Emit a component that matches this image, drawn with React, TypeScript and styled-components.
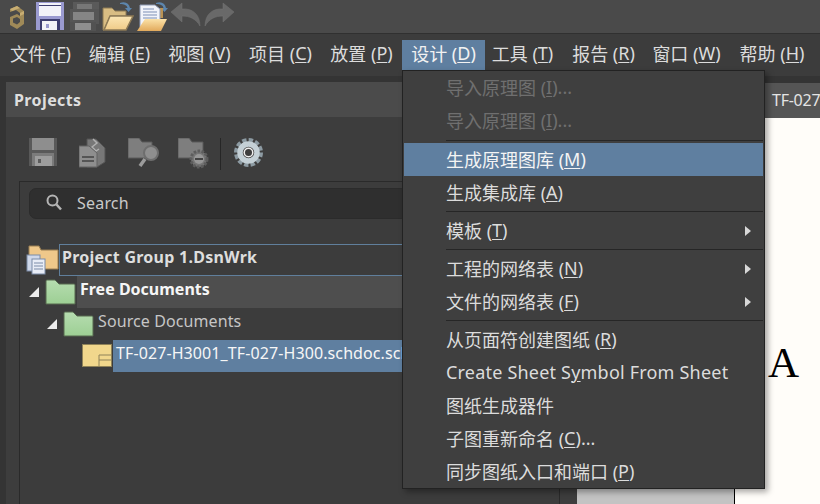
import React from "react";
import styled, { createGlobalStyle } from "styled-components";

const Global = createGlobalStyle`
  html, body { margin: 0; padding: 0; width: 820px; height: 504px; overflow: hidden; background: #333; }
  #root { width: 820px; height: 504px; }
  * { box-sizing: border-box; }
`;

const FONT = `"Noto Sans", "Noto Sans CJK SC", sans-serif`;

const Page = styled.div`
  position: relative;
  width: 820px;
  height: 504px;
  display: flex;
  flex-direction: column;
  overflow: hidden;
  font-family: ${FONT};
  font-size: 18px;
  color: #dcdcdc;
`;

const Toolbar = styled.div`
  height: 34px;
  flex: none;
  display: flex;
  align-items: flex-start;
  background: #4a4a4a;
  border-bottom: 1px solid #303030;
`;

const ToolIcon = styled.svg<{ $ml: number }>`
  display: block;
  flex: none;
  margin-left: ${(p) => p.$ml}px;
`;

const MenuBar = styled.div`
  height: 42px;
  flex: none;
  display: flex;
  align-items: flex-start;
  padding: 6px 0 0 1px;
  background: #3c3c3c;
`;

const MenuTitle = styled.div<{ $active?: boolean; $w: number }>`
  height: 30px;
  width: ${(p) => p.$w}px;
  flex: none;
  display: flex;
  align-items: center;
  justify-content: center;
  padding-bottom: 4px;
  white-space: nowrap;
  background: ${(p) => (p.$active ? "#5f7fa0" : "transparent")};
  color: ${(p) => (p.$active ? "#f2f2f2" : "#dcdcdc")};
`;

const Key = styled.span`
  text-decoration: underline;
  text-underline-offset: 2px;
  text-decoration-thickness: 1px;
`;

const Workspace = styled.div`
  flex: 1;
  min-height: 0;
  display: flex;
  background: #343434;
  padding: 6px 0 0 6px;
`;

const Panel = styled.div`
  width: 571px;
  flex: none;
  display: flex;
  flex-direction: column;
  background: #3d3d3d;
`;

const PanelHeader = styled.div`
  height: 35px;
  flex: none;
  display: flex;
  align-items: center;
  padding-left: 8px;
  background: #4b4b4b;
  font-size: 16px;
  font-weight: 700;
  letter-spacing: 0.4px;
  color: #dedede;
`;

const IconBar = styled.div`
  height: 64px;
  flex: none;
  display: flex;
  align-items: flex-start;
  padding: 21px 0 0 0;
`;

const BarDivider = styled.div`
  width: 1px;
  height: 32px;
  flex: none;
  margin: 0 0 0 10px;
  background: #262626;
`;

const TreeFrame = styled.div`
  flex: 1;
  min-height: 0;
  margin: 0 17px 0 13px;
  border: 1px solid #2a2a2a;
  border-bottom: none;
  background: #3c3c3c;
  padding: 6px 0 0 9px;
  overflow: hidden;
`;

const SearchBox = styled.div`
  height: 31px;
  display: flex;
  align-items: center;
  gap: 15px;
  padding: 0 0 2px 16px;
  border: 1px solid #2b2b2b;
  border-radius: 7px;
  background: #2f2f2f;
  font-size: 16px;
  letter-spacing: 0.2px;
  color: #c9c9c9;
`;

const Tree = styled.div`
  margin: 25px 0 0 -10px;
  display: flex;
  flex-direction: column;
  font-size: 16px;
`;

const TreeRow = styled.div<{ $indent: number }>`
  height: 32px;
  display: flex;
  align-items: center;
  padding-left: ${(p) => p.$indent}px;
  white-space: nowrap;
`;

const Twist = styled.span`
  width: 0;
  height: 0;
  flex: none;
  margin-right: 6px;
  border-style: solid;
  border-width: 0 0 10px 10px;
  border-color: transparent transparent #ececec transparent;
`;

const TreeLabel = styled.div<{ $kind: "root" | "bold" | "plain" | "selected" }>`
  flex: 1;
  align-self: stretch;
  display: flex;
  align-items: center;
  padding: 0 0 6px ${(p) => (p.$kind === "root" ? 2 : 3)}px;
  margin-left: ${(p) => (p.$kind === "root" ? 0 : 1)}px;
  font-weight: ${(p) => (p.$kind === "root" || p.$kind === "bold" ? 700 : 400)};
  letter-spacing: ${(p) => (p.$kind === "root" ? 0.25 : p.$kind === "bold" ? 0 : 0.1)}px;
  color: ${(p) =>
    p.$kind === "plain" ? "#c6c6c6" : p.$kind === "root" ? "#dedede" : "#f6f6f6"};
  background: ${(p) =>
    p.$kind === "bold" ? "#4e4e4e" : p.$kind === "selected" ? "#5f7fa0" : "transparent"};
  border: ${(p) => (p.$kind === "root" ? "1px solid #607f9c" : "none")};
`;

const DocArea = styled.div`
  flex: 1;
  min-width: 0;
  display: flex;
  flex-direction: column;
  padding-top: 1px;
`;

const TabStrip = styled.div`
  height: 35px;
  flex: none;
  display: flex;
  align-items: center;
  justify-content: flex-end;
  background: #555;
  font-size: 16px;
  color: #e4e4e4;
  white-space: nowrap;
`;

const TabLabel = styled.span`
  width: 48px;
  flex: none;
  padding-bottom: 1px;
  letter-spacing: -0.25px;
`;

const Sheet = styled.div`
  flex: 1;
  min-height: 0;
  display: flex;
  flex-direction: column;
  background: #fffdf9;
`;

const ZoneLetter = styled.div`
  margin: 220px 0 0 191px;
  font-family: "Liberation Serif", serif;
  font-size: 43px;
  line-height: 50px;
  color: #000;
`;

const SheetMargin = styled.div`
  margin-top: auto;
  width: 158px;
  height: 40px;
  background: #c3c3c3;
  border-right: 1px solid #000;
`;

const Dropdown = styled.div`
  position: absolute;
  left: 402px;
  top: 70px;
  width: 363px;
  height: 419px;
  padding: 0 1px;
  background: #3f3f3f;
  border: 1px solid #222;
  box-shadow: 3px 3px 6px rgba(0, 0, 0, 0.35);
`;

const DropRow = styled.div<{ $disabled?: boolean; $active?: boolean; $latin?: boolean }>`
  height: 33px;
  display: flex;
  align-items: center;
  padding: 0 12px 2px 42px;
  white-space: nowrap;
  letter-spacing: ${(p) => (p.$latin ? 0.2 : 0)}px;
  background: ${(p) => (p.$active ? "#5f7fa0" : "transparent")};
  color: ${(p) => (p.$disabled ? "#6f6f6f" : p.$active ? "#f4f4f4" : "#dcdcdc")};
`;

const DropSep = styled.div<{ $h: number }>`
  height: ${(p) => p.$h}px;
  display: flex;
  align-items: center;
  padding-left: 42px;
  &::after {
    content: "";
    flex: 1;
    height: 1px;
    background: #262626;
  }
`;

const SubArrow = styled.span`
  width: 0;
  height: 0;
  margin: 2px 0 0 auto;
  border-style: solid;
  border-width: 5px 0 5px 6px;
  border-color: transparent transparent transparent #d8d8d8;
`;

function label(s: string) {
  const i = s.indexOf("&");
  if (i < 0) return s;
  return (
    <>
      {s.slice(0, i)}
      <Key>{s[i + 1]}</Key>
      {s.slice(i + 2)}
    </>
  );
}

const menus: { t: string; w: number; active?: boolean }[] = [
  { t: "文件 (&F)", w: 79 },
  { t: "编辑 (&E)", w: 79 },
  { t: "视图 (&V)", w: 81 },
  { t: "项目 (&C)", w: 81 },
  { t: "放置 (&P)", w: 81 },
  { t: "设计 (&D)", w: 83, active: true },
  { t: "工具 (&T)", w: 75 },
  { t: "报告 (&R)", w: 87 },
  { t: "窗口 (&W)", w: 79 },
  { t: "帮助 (&H)", w: 92 },
];

type Item =
  | { sep: number }
  | { t: string; disabled?: boolean; active?: boolean; sub?: boolean; latin?: boolean };

const items: Item[] = [
  { t: "导入原理图 (&I)...", disabled: true },
  { t: "导入原理图 (&I)...", disabled: true },
  { sep: 6 },
  { t: "生成原理图库 (&M)", active: true },
  { t: "生成集成库 (&A)" },
  { sep: 5 },
  { t: "模板 (&T)", sub: true },
  { sep: 5 },
  { t: "工程的网络表 (&N)", sub: true },
  { t: "文件的网络表 (&F)", sub: true },
  { sep: 5 },
  { t: "从页面符创建图纸 (&R)" },
  { t: "Create Sheet S&ymbol From Sheet", latin: true },
  { t: "图纸生成器件" },
  { t: "子图重新命名 (&C)..." },
  { t: "同步图纸入口和端口 (&P)" },
];

const Logo = () => (
  <ToolIcon $ml={8} width="17" height="26" viewBox="0 0 17 26" style={{ marginTop: 4 }}>
    <path d="M2 5 L9 2 L16 7 V20 L9 25 L2 21 V13 L9 10 L12 12 V9 L8 6 L2 8 Z" fill="#a08a58" />
    <path d="M5 14.5 L9 13 L12 15 V18 L9 20.5 L5 18.5 Z" fill="#4a4a4a" />
    <path d="M2 5 L9 2 L12 4 L4 7 Z M12 9 L16 7 V10 L12 12 Z" fill="#c9ae72" />
  </ToolIcon>
);

const Floppy = ({ ml, c1, c2, c3 }: { ml: number; c1: string; c2: string; c3: string }) => (
  <ToolIcon $ml={ml} width="28" height="28" viewBox="0 0 28 28" style={{ marginTop: 2 }}>
    <rect x="0" y="0" width="28" height="28" fill={c1} />
    <rect x="3" y="1" width="22" height="13" fill={c2} />
    <rect x="3" y="3" width="22" height="1" fill={c3} />
    <rect x="4" y="17" width="20" height="11" fill={c3} />
    <rect x="6" y="19" width="15" height="9" fill={c2} />
    <rect x="10" y="22" width="3" height="4" fill={c1} />
  </ToolIcon>
);

const Printer = () => (
  <ToolIcon $ml={6} width="30" height="29" viewBox="0 0 30 29" style={{ marginTop: 2 }}>
    <rect x="3" y="0" width="26" height="10" fill="#5a5a5a" />
    <rect x="7" y="2" width="15" height="5" fill="#777" />
    <rect x="0" y="7" width="29" height="15" fill="#565656" />
    <rect x="3" y="10" width="21" height="8" fill="#858585" />
    <rect x="0" y="20" width="26" height="9" fill="#525252" />
    <rect x="5" y="21" width="16" height="7" fill="#8f8f8f" />
  </ToolIcon>
);

const Arrow = ({ x }: { x: number }) => (
  <path
    d={`M${x} 2 C${x + 5} 0 ${x + 9} 2 ${x + 10} 7 L${x + 12} 7 L${x + 8.5} 11 L${x + 5} 7 L${x + 7.5} 7 C${x + 7} 4 ${x + 4} 3 ${x} 3 Z`}
    fill="#5d86ad"
  />
);

const OpenFolder = () => (
  <ToolIcon $ml={2} width="32" height="30" viewBox="0 0 32 30" style={{ marginTop: 1 }}>
    <defs>
      <linearGradient id="openFront" x1="0" y1="0" x2="0" y2="1">
        <stop offset="0" stopColor="#fbe6b4" />
        <stop offset="1" stopColor="#efcb88" />
      </linearGradient>
    </defs>
    <Arrow x={18} />
    <path d="M1 7 H10 L13 10 H24 V15 H8 L2 29 H1 Z" fill="#d9bd83" stroke="#8d7a55" strokeWidth="1" />
    <path d="M8 15 H31 L24 29 H2 Z" fill="url(#openFront)" stroke="#8d7a55" strokeWidth="1.5" />
  </ToolIcon>
);

const DocFolder = () => (
  <ToolIcon $ml={2} width="32" height="30" viewBox="0 0 32 30" style={{ marginTop: 1 }}>
    <defs>
      <linearGradient id="docFront" x1="0" y1="0" x2="0" y2="1">
        <stop offset="0" stopColor="#fbe2a8" />
        <stop offset="1" stopColor="#e2aa5c" />
      </linearGradient>
    </defs>
    <Arrow x={20} />
    <path d="M24 7 H27 V17 H24 Z" fill="#b99354" />
    <path d="M4 4 H19 L24 8 V26 H4 Z" fill="#f2f4fa" stroke="#8f9bb5" strokeWidth="1" />
    <path d="M7 8 H18 M7 11 H21 M7 14 H21 M7 17 H21" stroke="#7d8fb5" strokeWidth="1" />
    <path d="M9 18 H31 L25 30 H1 Z" fill="url(#docFront)" />
  </ToolIcon>
);

const Undo = ({ flip, ml }: { flip?: boolean; ml: number }) => (
  <ToolIcon
    $ml={ml}
    width="30"
    height="24"
    viewBox="0 0 30 24"
    style={{ marginTop: 2, transform: flip ? "scaleX(-1)" : undefined }}
  >
    <path
      d="M0 10 L11 1 V7 C21 6 29 12 29 24 C25 17 19 14 11 14 V20 Z"
      fill="#696969"
      stroke="#747474"
      strokeWidth="0.5"
    />
  </ToolIcon>
);

const PanelSave = () => (
  <ToolIcon $ml={23} width="28" height="28" viewBox="0 0 28 28">
    <rect width="28" height="28" fill="#595959" />
    <rect x="3" y="0" width="22" height="12" fill="#8e8e8e" />
    <rect x="3" y="15" width="22" height="13" fill="#7b7b7b" />
    <rect x="6" y="18" width="17" height="10" fill="#9d9d9d" />
    <rect x="9" y="21" width="3" height="4" fill="#5c5c5c" />
  </ToolIcon>
);

const PanelDocs = () => (
  <ToolIcon $ml={22} width="27" height="30" viewBox="0 0 27 30">
    <path d="M8 1 H17 L26 10 V24 L18 29 H8 Z" fill="#777" stroke="#555" strokeWidth="1" />
    <path d="M14 1 L18 5 L13 9 L17 13 L20 11" fill="none" stroke="#b0b0b0" strokeWidth="1.5" />
    <path d="M0 8 H10 L18 15 V29 H0 Z" fill="#8e8e8e" stroke="#636363" strokeWidth="1" />
    <path d="M3 19 H15 M3 23 H15" stroke="#555" strokeWidth="2" />
  </ToolIcon>
);

const FolderSearch = () => (
  <ToolIcon $ml={22} width="32" height="31" viewBox="0 0 32 31">
    <path d="M0 0 H11 L14 4 H24 V20 H0 Z" fill="#7e7e7e" stroke="#5b5b5b" strokeWidth="1" />
    <circle cx="23" cy="15" r="7" fill="#8f8f8f" stroke="#6e6e6e" strokeWidth="2" />
    <path d="M17 21 L12 28" stroke="#9c9c9c" strokeWidth="3.5" />
  </ToolIcon>
);

const FolderGear = () => (
  <ToolIcon $ml={18} width="32" height="32" viewBox="0 0 32 32">
    <path d="M0 0 H11 L14 4 H25 V20 H0 Z" fill="#7e7e7e" stroke="#5b5b5b" strokeWidth="1" />
    <circle cx="21" cy="21" r="8" fill="#757575" stroke="#5d5d5d" strokeWidth="3" strokeDasharray="2.5 1.5" />
    <circle cx="21" cy="21" r="5" fill="#979797" />
    <rect x="17" y="20" width="8" height="2" fill="#444" />
  </ToolIcon>
);

const BigGear = () => (
  <ToolIcon $ml={13} width="29" height="29" viewBox="0 0 29 29">
    <circle cx="14.5" cy="14.5" r="11.5" fill="none" stroke="#8d9ba3" strokeWidth="6" strokeDasharray="4 2" />
    <circle cx="14.5" cy="14.5" r="8.5" fill="none" stroke="#c4d0d6" strokeWidth="5.5" />
    <circle cx="14.5" cy="14.5" r="5" fill="#f0f0f0" />
    <circle cx="14.5" cy="14.5" r="3.5" fill="#3d3d3d" />
  </ToolIcon>
);

const SearchGlyph = () => (
  <svg width="16" height="17" viewBox="0 0 16 17" style={{ flex: "none" }}>
    <circle cx="6.5" cy="6.5" r="5" fill="none" stroke="#b5b5b5" strokeWidth="2" />
    <path d="M10.5 10.5 L15 15.5" stroke="#b5b5b5" strokeWidth="2.5" />
  </svg>
);

const Green = () => (
  <svg width="31" height="26" viewBox="0 0 31 26" style={{ flex: "none" }}>
    <defs>
      <linearGradient id="greenFill" x1="0" y1="0" x2="0" y2="1">
        <stop offset="0" stopColor="#b6dcb0" />
        <stop offset="1" stopColor="#9dcf94" />
      </linearGradient>
    </defs>
    <path
      d="M1 25 V2 Q1 1 2 1 H10 L14 5 H29 Q30 5 30 6 V25 Z"
      fill="url(#greenFill)"
      stroke="#56684f"
      strokeWidth="1"
    />
  </svg>
);

const GroupIcon = () => (
  <svg width="33" height="30" viewBox="0 0 33 30" style={{ flex: "none" }}>
    <path d="M3 1 H13 L15 5 H32 V24 H3 Z" fill="#efc88a" stroke="#9a7f53" strokeWidth="1" />
    <rect x="1" y="10" width="13" height="16" fill="#cfd8ea" stroke="#7b8ba8" strokeWidth="1" />
    <rect x="6" y="14" width="13" height="15" fill="#e8edf7" stroke="#7b8ba8" strokeWidth="1" />
    <path d="M8 18 H17 M8 21 H17 M8 24 H17" stroke="#7b8ba8" strokeWidth="1" />
  </svg>
);

const SchDoc = () => (
  <svg width="30" height="23" viewBox="0 0 30 23" style={{ flex: "none", marginTop: -2 }}>
    <rect x="0.5" y="0.5" width="29" height="22" fill="#f1d78c" stroke="#8f8258" strokeWidth="1" />
    <path d="M17 22 V11 H29 M17 16 H29" fill="none" stroke="#8f8258" strokeWidth="1" />
  </svg>
);

export default function App() {
  return (
    <Page>
      <Global />
      <Toolbar>
        <Logo />
        <Floppy ml={11} c1="#9a9ad0" c2="#f2f2f8" c3="#3d3d70" />
        <Printer />
        <OpenFolder />
        <DocFolder />
        <Undo ml={3} />
        <Undo ml={3} flip />
      </Toolbar>
      <MenuBar>
        {menus.map((m) => (
          <MenuTitle key={m.t} $w={m.w} $active={m.active}>
            {label(m.t)}
          </MenuTitle>
        ))}
      </MenuBar>
      <Workspace>
        <Panel>
          <PanelHeader>Projects</PanelHeader>
          <IconBar>
            <PanelSave />
            <PanelDocs />
            <FolderSearch />
            <FolderGear />
            <BarDivider />
            <BigGear />
          </IconBar>
          <TreeFrame>
            <SearchBox>
              <SearchGlyph />
              Search
            </SearchBox>
            <Tree>
              <TreeRow $indent={7}>
                <GroupIcon />
                <TreeLabel $kind="root">Project Group 1.DsnWrk</TreeLabel>
              </TreeRow>
              <TreeRow $indent={10}>
                <Twist />
                <Green />
                <TreeLabel $kind="bold">Free Documents</TreeLabel>
              </TreeRow>
              <TreeRow $indent={28}>
                <Twist />
                <Green />
                <TreeLabel $kind="plain">Source Documents</TreeLabel>
              </TreeRow>
              <TreeRow $indent={63}>
                <SchDoc />
                <TreeLabel $kind="selected">TF-027-H3001_TF-027-H300.schdoc.schdoc</TreeLabel>
              </TreeRow>
            </Tree>
          </TreeFrame>
        </Panel>
        <DocArea>
          <TabStrip>
            <TabLabel>TF-027</TabLabel>
          </TabStrip>
          <Sheet>
            <ZoneLetter>A</ZoneLetter>
            <SheetMargin />
          </Sheet>
        </DocArea>
      </Workspace>
      <Dropdown>
        {items.map((it, i) =>
          "sep" in it ? (
            <DropSep key={i} $h={it.sep} />
          ) : (
            <DropRow key={i} $disabled={it.disabled} $active={it.active} $latin={it.latin}>
              {label(it.t)}
              {it.sub && <SubArrow />}
            </DropRow>
          )
        )}
      </Dropdown>
    </Page>
  );
}
